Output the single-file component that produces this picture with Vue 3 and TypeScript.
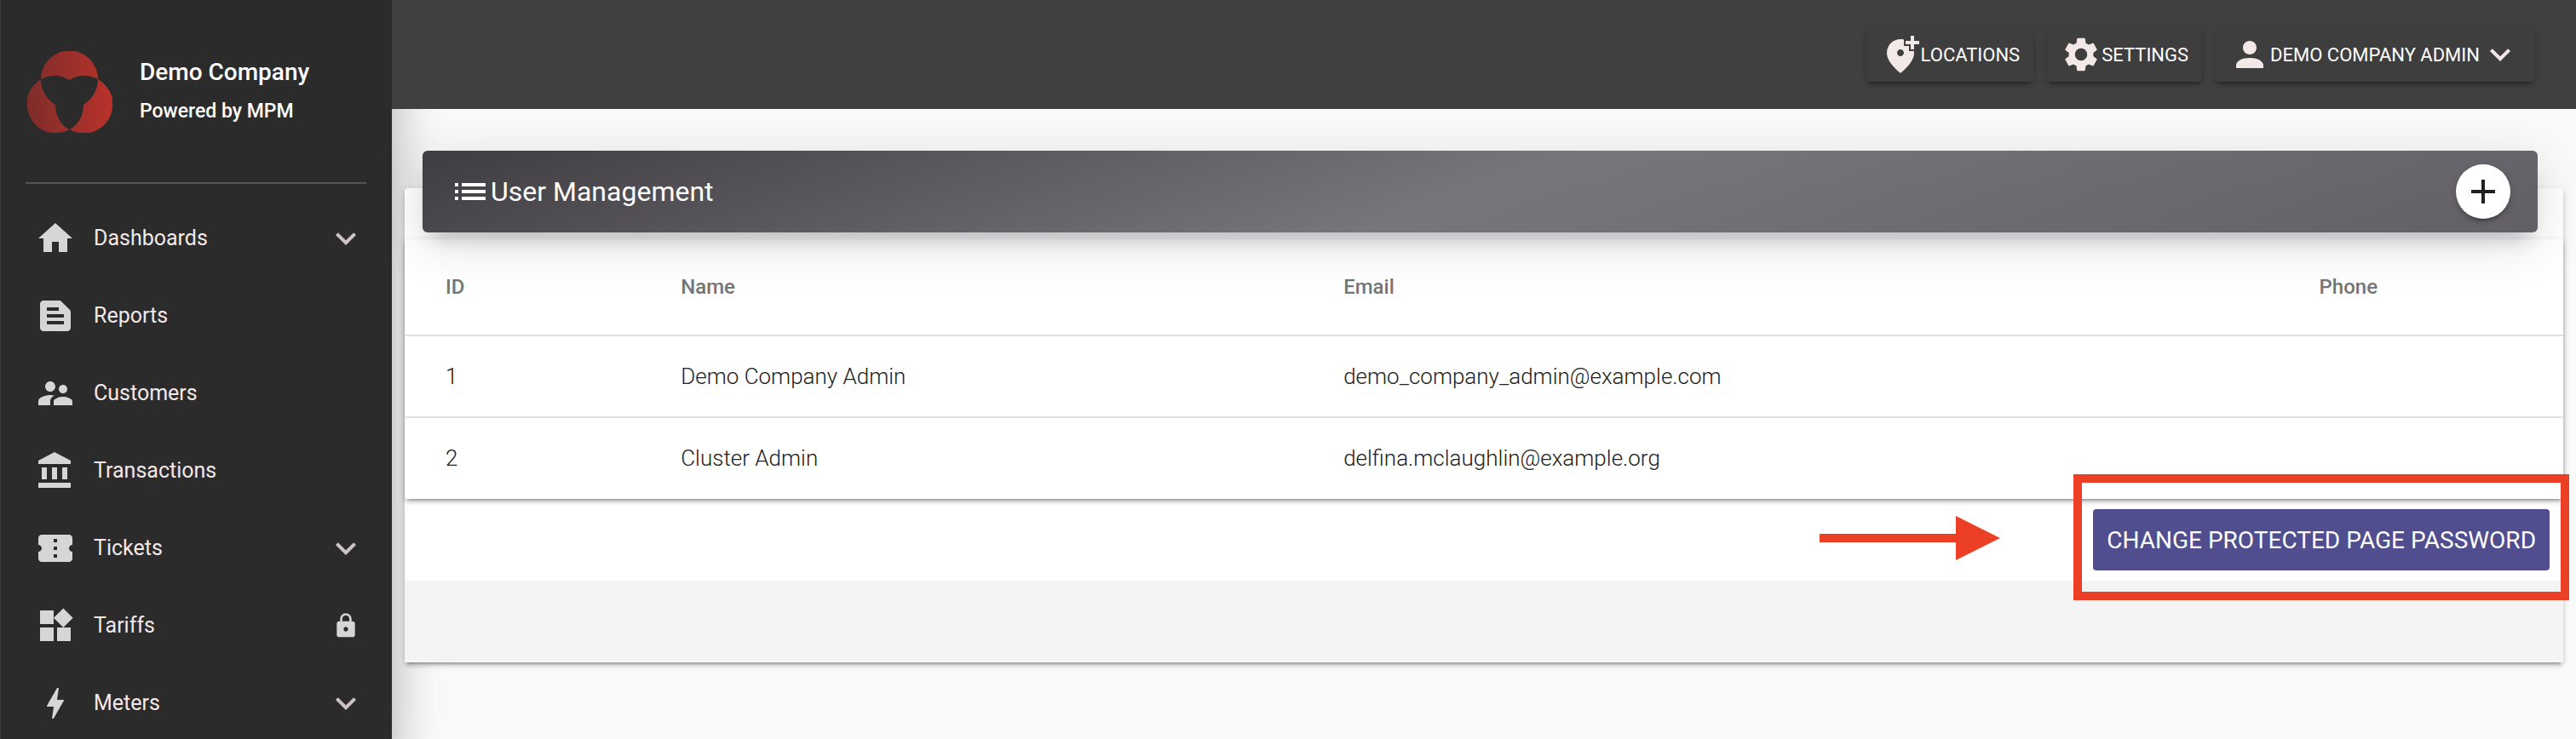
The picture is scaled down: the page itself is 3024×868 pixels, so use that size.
<script setup lang="ts">
interface NavItem {
  label: string
  icon: string
  trailing?: 'chevron' | 'lock'
}

interface User {
  id: number
  name: string
  email: string
  phone: string
}

const chevron = 'M7.41 8.59 12 13.17l4.59-4.58L18 10l-6 6-6-6 1.41-1.41z'
const lock =
  'M18 8h-1V6c0-2.76-2.24-5-5-5S7 3.24 7 6v2H6c-1.1 0-2 .9-2 2v10c0 1.1.9 2 2 2h12c1.1 0 2-.9 2-2V10c0-1.1-.9-2-2-2zm-6 9c-1.1 0-2-.9-2-2s.9-2 2-2 2 .9 2 2-.9 2-2 2zm3.1-9H8.9V6c0-1.71 1.39-3.1 3.1-3.1 1.71 0 3.1 1.39 3.1 3.1v2z'
const locationIcon =
  'M20 1v3h3v2h-3v3h-2V6h-3V4h3V1h2zm-8 12c1.1 0 2-.9 2-2s-.9-2-2-2-2 .9-2 2 .9 2 2 2zm2-9.75V7h3v3h2.92c.05.39.08.79.08 1.2 0 3.32-2.67 7.25-8 11.8-5.33-4.55-8-8.48-8-11.8C4 6.22 7.8 3 12 3c.68 0 1.35.08 2 .25z'
const settingsIcon =
  'M19.14 12.94c.04-.3.06-.61.06-.94 0-.32-.02-.64-.07-.94l2.03-1.58c.18-.14.23-.41.12-.61l-1.92-3.32c-.12-.22-.37-.29-.59-.22l-2.39.96c-.5-.38-1.03-.7-1.62-.94l-.36-2.54c-.04-.24-.24-.41-.48-.41h-3.84c-.24 0-.43.17-.47.41l-.36 2.54c-.59.24-1.13.57-1.62.94l-2.39-.96c-.22-.08-.47 0-.59.22L2.74 8.87c-.12.21-.08.47.12.61l2.03 1.58c-.05.3-.09.63-.09.94s.02.64.07.94l-2.03 1.58c-.18.14-.23.41-.12.61l1.92 3.32c.12.22.37.29.59.22l2.39-.96c.5.38 1.03.7 1.62.94l.36 2.54c.05.24.24.41.48.41h3.84c.24 0 .44-.17.47-.41l.36-2.54c.59-.24 1.13-.56 1.62-.94l2.39.96c.22.08.47 0 .59-.22l1.92-3.32c.12-.22.07-.47-.12-.61l-2.01-1.58zM12 15.6c-1.98 0-3.6-1.62-3.6-3.6s1.62-3.6 3.6-3.6 3.6 1.62 3.6 3.6-1.62 3.6-3.6 3.6z'
const personIcon =
  'M12 12c2.21 0 4-1.79 4-4s-1.79-4-4-4-4 1.79-4 4 1.79 4 4 4zm0 2c-4.2 0-8 1.7-8 4.400v1.600h16v-1.600c0-2.700-3.800-4.400-8-4.400z'
const listIcon = 'M3 13h2v-2H3v2zm0 4h2v-2H3v2zm0-8h2V7H3v2zm4 4h14v-2H7v2zm0 4h14v-2H7v2zM7 7v2h14V7H7z'

const navItems: NavItem[] = [
  { label: 'Dashboards', icon: 'M10 20v-6h4v6h5v-8h3L12 3 2 12h3v8z', trailing: 'chevron' },
  {
    label: 'Reports',
    icon: 'M20.41 8.41l-4.83-4.83C15.21 3.21 14.7 3 14.17 3H5c-1.1 0-2 .9-2 2v14c0 1.1.9 2 2 2h14c1.1 0 2-.9 2-2V9.83c0-.53-.21-1.04-.59-1.42zM7 7h7v2H7V7zm10 10H7v-2h10v2zm0-4H7v-2h10v2z',
  },
  {
    label: 'Customers',
    icon: 'M16.5 12c1.38 0 2.49-1.12 2.49-2.5S17.88 7 16.5 7C15.12 7 14 8.12 14 9.5s1.12 2.5 2.5 2.5zM9 11c1.66 0 2.99-1.34 2.99-3S10.66 5 9 5C7.34 5 6 6.34 6 8s1.34 3 3 3zm7.5 3c-1.83 0-5.5.92-5.5 2.75V19h11v-2.25c0-1.83-3.67-2.75-5.5-2.75zM9 13c-2.33 0-7 1.17-7 3.5V19h7v-2.25c0-.85.33-2.34 2.37-3.47C10.5 13.1 9.66 13 9 13z',
  },
  {
    label: 'Transactions',
    icon: 'M4 10v7h3v-7H4zm6 0v7h3v-7h-3zM2 22h19v-3H2v3zm14-12v7h3v-7h-3zm-4.5-9L2 6v2h19V6l-9.5-5z',
  },
  {
    label: 'Tickets',
    icon: 'M22 10V6c0-1.11-.9-2-2-2H4c-1.1 0-1.99.89-1.99 2v4c1.1 0 1.99.9 1.99 2s-.89 2-2 2v4c0 1.1.9 2 2 2h16c1.1 0 2-.9 2-2v-4c-1.1 0-2-.9-2-2s.9-2 2-2zm-9 7.5h-2v-2h2v2zm0-4.5h-2v-2h2v2zm0-4.5h-2v-2h2v2z',
    trailing: 'chevron',
  },
  {
    label: 'Tariffs',
    icon: 'M13 13v8h8v-8h-8zM3 21h8v-8H3v8zM3 3v8h8V3H3zm13.66-1.31L11 7.34 16.66 13l5.66-5.66-5.66-5.65z',
    trailing: 'lock',
  },
  {
    label: 'Meters',
    icon: 'M11 21h-1l1-7H7.5c-.58 0-.57-.32-.38-.66.19-.34.05-.08.07-.12C8.48 10.94 10.42 7.54 13 3h1l-1 7h3.5c.49 0 .56.33.47.51l-.07.15C12.96 17.55 11 21 11 21z',
    trailing: 'chevron',
  },
]

const users: User[] = [
  { id: 1, name: 'Demo Company Admin', email: 'demo_company_admin@example.com', phone: '' },
  { id: 2, name: 'Cluster Admin', email: 'delfina.mclaughlin@example.org', phone: '' },
]
</script>

<template>
  <div class="layout">
    <aside class="sidebar">
      <div class="brand">
        <svg class="logo" viewBox="0 0 100 96" aria-hidden="true">
          <defs>
            <linearGradient id="brand-red" gradientUnits="userSpaceOnUse" x1="0" y1="0" x2="100" y2="0">
              <stop offset="0" stop-color="#7e2d2b" />
              <stop offset="1" stop-color="#b8322a" />
            </linearGradient>
          </defs>
          <g fill="url(#brand-red)">
            <path d="M16 33a33.500 33.500 0 1 1 67 0Q65 24 49.500 34 34 24 16 33z" />
            <path d="M16 33C16 46 23 57 33 63C33 77 40 87 49 92Q43 96 34 96H27A33.500 33.500 0 0 1 0 66V55Q4 40 16 33z" />
            <path d="M83 33C83 46 76 57 66 63C66 77 59 87 50 92Q56 96 65 96H73A33.500 33.500 0 0 0 100 66V55Q95 40 83 33z" />
          </g>
        </svg>
        <div>
          <div class="brand-name">Demo Company</div>
          <div class="brand-sub">Powered by MPM</div>
        </div>
      </div>
      <nav class="nav">
        <a v-for="item in navItems" :key="item.label" class="nav-item" href="#">
          <svg class="icon" viewBox="0 0 24 24" aria-hidden="true"><path :d="item.icon" /></svg>
          <span class="nav-label">{{ item.label }}</span>
          <span class="nav-trailing">
            <svg v-if="item.trailing === 'chevron'" class="icon chevron" viewBox="0 0 24 24" aria-hidden="true">
              <path :d="chevron" />
            </svg>
            <svg v-else-if="item.trailing === 'lock'" class="icon lock" viewBox="0 0 24 24" aria-hidden="true">
              <path :d="lock" />
            </svg>
          </span>
        </a>
      </nav>
    </aside>

    <div class="main">
      <header class="topbar">
        <button class="top-button" type="button">
          <svg class="icon" viewBox="0 0 24 24" aria-hidden="true"><path :d="locationIcon" /></svg>Locations
        </button>
        <button class="top-button" type="button">
          <svg class="icon" viewBox="0 0 24 24" aria-hidden="true"><path :d="settingsIcon" /></svg>Settings
        </button>
        <button class="top-button" type="button">
          <svg class="icon" viewBox="0 0 24 24" aria-hidden="true"><path :d="personIcon" /></svg>Demo Company Admin
          <svg class="icon" viewBox="0 0 24 24" aria-hidden="true"><path :d="chevron" /></svg>
        </button>
      </header>

      <main class="content">
        <section class="widget">
          <div class="widget-header">
            <svg class="icon" viewBox="0 0 24 24" aria-hidden="true"><path :d="listIcon" /></svg>
            <h1 class="widget-title">User Management</h1>
            <button class="add-button" type="button" aria-label="Add user">
              <svg class="icon" viewBox="0 0 24 24" aria-hidden="true"><path d="M19 13h-6v6h-2v-6H5v-2h6V5h2v6h6z" /></svg>
            </button>
          </div>
          <div class="table-card">
            <table class="table">
              <colgroup>
                <col class="col-id" />
                <col class="col-name" />
                <col class="col-email" />
                <col />
              </colgroup>
              <thead>
                <tr>
                  <th scope="col">ID</th>
                  <th scope="col">Name</th>
                  <th scope="col">Email</th>
                  <th scope="col">Phone</th>
                </tr>
              </thead>
              <tbody>
                <tr v-for="user in users" :key="user.id">
                  <td>{{ user.id }}</td>
                  <td>{{ user.name }}</td>
                  <td>{{ user.email }}</td>
                  <td>{{ user.phone }}</td>
                </tr>
              </tbody>
            </table>
          </div>
          <div class="actions">
            <div class="highlighted">
              <button class="primary-button" type="button">Change Protected Page Password</button>
              <span class="highlight-frame"></span>
              <svg class="highlight-arrow" viewBox="0 0 212 52" aria-hidden="true">
                <path d="M0 21h160V0l52 26-52 26V31H0z" />
              </svg>
            </div>
          </div>
          <div class="widget-footer"></div>
        </section>
      </main>
    </div>
  </div>
</template>

<style>
html,
body {
  background: #fafafa;
}
</style>

<style scoped>
.layout {
  display: flex;
  min-height: 100vh;
  overflow: hidden;
  background: #fafafa;
  color: #212121;
  font-family: Roboto, "Liberation Sans", sans-serif;
}

.icon {
  flex: none;
  display: block;
  width: 48px;
  height: 48px;
  fill: currentColor;
}

.sidebar {
  box-sizing: border-box;
  flex: none;
  width: 460px;
  border-left: 1px solid #404040;
  background: #2b2b2b;
  box-shadow:
    0 16px 20px -10px rgba(0, 0, 0, 0.2),
    0 32px 48px 4px rgba(0, 0, 0, 0.14),
    0 12px 60px 10px rgba(0, 0, 0, 0.12);
}

.brand {
  display: flex;
  align-items: center;
  gap: 32px;
  margin: 0 30px 0 29px;
  padding: 60px 0 58px 2px;
  border-bottom: 2px solid #555;
  color: #fff;
}

.logo {
  width: 100px;
  height: 96px;
}

.brand-name {
  font-size: 28px;
  font-weight: 500;
  line-height: 40px;
}

.brand-sub {
  margin-top: 6px;
  font-size: 23px;
  font-weight: 500;
  line-height: 40px;
}

.nav {
  padding: 18px 30px 0 40px;
}

.nav-item {
  display: flex;
  align-items: center;
  gap: 21px;
  height: 91px;
  color: #d6d6d6;
  text-decoration: none;
}

.nav-label {
  flex: 1;
  color: #f3e8e8;
  font-size: 25px;
}

.nav-trailing {
  display: flex;
  justify-content: center;
  width: 48px;
}

.chevron {
  color: #cdc3c3;
}

.lock {
  width: 32px;
  height: 32px;
}

.main {
  flex: 1;
  min-width: 0;
}

.topbar {
  position: relative;
  display: flex;
  align-items: center;
  justify-content: flex-end;
  gap: 16px;
  height: 128px;
  padding-right: 49px;
  background: #404040;
}

.top-button {
  display: flex;
  align-items: center;
  height: 64px;
  padding: 0 16px;
  border: 0;
  border-radius: 4px;
  background: #3e3e3e;
  box-shadow:
    0 6px 2px -4px rgba(0, 0, 0, 0.2),
    0 4px 4px 0 rgba(0, 0, 0, 0.14),
    0 2px 10px 0 rgba(0, 0, 0, 0.12);
  color: #fff;
  font-family: inherit;
  font-size: 22px;
  text-transform: uppercase;
}

.top-button .icon {
  color: #f3e8e8;
}

.content {
  padding: 93px 15px 0;
}

.widget {
  position: relative;
  border-radius: 4px;
  background: #fff;
  box-shadow:
    0 6px 2px -4px rgba(0, 0, 0, 0.2),
    0 4px 4px 0 rgba(0, 0, 0, 0.14),
    0 2px 10px 0 rgba(0, 0, 0, 0.12);
}

.widget-header {
  position: relative;
  z-index: 1;
  top: -44px;
  display: flex;
  align-items: center;
  height: 96px;
  margin: 0 30px -36px 21px;
  padding: 0 32px;
  border-radius: 6px;
  background: linear-gradient(161deg, #3f3d41 0%, #78757c 50%, #635f66 100%);
  box-shadow:
    0 12px 60px 0 rgba(0, 0, 0, 0.14),
    0 16px 20px -10px rgba(0, 0, 0, 0.2);
  color: #fff;
}

.widget-title {
  flex: 1;
  margin: 0;
  font-size: 32px;
  font-weight: 400;
}

.add-button {
  display: flex;
  align-items: center;
  justify-content: center;
  width: 64px;
  height: 64px;
  padding: 0;
  border: 0;
  border-radius: 50%;
  background: #fff;
  box-shadow:
    0 6px 2px -4px rgba(0, 0, 0, 0.2),
    0 4px 4px 0 rgba(0, 0, 0, 0.14),
    0 2px 10px 0 rgba(0, 0, 0, 0.12);
  color: #212121;
}

.table-card {
  padding-bottom: 1px;
  border-radius: 4px;
  background: #fff;
  box-shadow:
    0 6px 2px -4px rgba(0, 0, 0, 0.2),
    0 4px 4px 0 rgba(0, 0, 0, 0.14),
    0 2px 10px 0 rgba(0, 0, 0, 0.12);
}

.table {
  width: 100%;
  border-spacing: 0;
  table-layout: fixed;
}

.col-id {
  width: 10.9%;
}

.col-name {
  width: 30.7%;
}

.col-email {
  width: 45.2%;
}

.table th,
.table td {
  padding: 0 48px;
  text-align: left;
}

.table th {
  height: 112px;
  color: #757575;
  font-size: 24px;
  font-weight: 500;
}

.table td {
  height: 94px;
  border-top: 2px solid #e0e0e0;
  font-size: 26px;
  font-weight: 300;
}

.actions {
  display: flex;
  justify-content: flex-end;
  padding: 12px 16px;
}

.highlighted {
  position: relative;
}

.primary-button {
  height: 72px;
  padding: 0 16px;
  border: 0;
  border-radius: 4px;
  background: #504e8e;
  color: #fff;
  font-family: inherit;
  font-size: 28px;
  text-transform: uppercase;
}

.highlight-frame {
  position: absolute;
  inset: -41px -23px -35px;
  border: 10px solid #ec4026;
  pointer-events: none;
}

.highlight-arrow {
  position: absolute;
  top: 8px;
  right: calc(100% + 109px);
  width: 212px;
  height: 52px;
  fill: #ec4026;
}

.widget-footer {
  height: 96px;
  background: #f4f4f4;
}
</style>
